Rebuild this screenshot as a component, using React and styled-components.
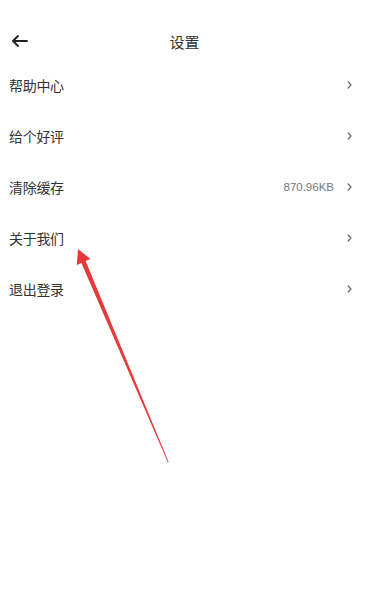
import React from 'react';
import styled, { createGlobalStyle } from 'styled-components';

const GlobalStyle = createGlobalStyle`
  html, body {
    margin: 0;
    padding: 0;
    background: #fff;
  }
  body {
    font-family: "Noto Sans CJK SC", "Noto Sans", sans-serif;
    color: #333;
  }
`;

const Page = styled.div`
  position: relative;
  width: 369px;
  height: 606px;
  background: #fff;
  overflow: hidden;
`;

const StatusSpace = styled.div`
  height: 21px;
`;

const Header = styled.div`
  height: 40px;
  display: flex;
  align-items: center;
  justify-content: center;
  position: relative;
`;

const BackButton = styled.button`
  position: absolute;
  left: 11px;
  top: 50%;
  transform: translateY(-50%);
  border: 0;
  background: none;
  padding: 0;
  display: flex;
  color: #222;
`;

const Title = styled.div`
  font-size: 15px;
  color: #333;
`;

const List = styled.div`
  display: flex;
  flex-direction: column;
`;

const Row = styled.div`
  height: 50.8px;
  margin-top: ${(p) => (p.first ? '-1px' : '0')};
  display: flex;
  align-items: center;
  padding: 0 17px 0 9px;
`;

const Label = styled.span`
  flex: 1;
  font-size: 14px;
  color: #333;
  letter-spacing: -0.3px;
`;

const Value = styled.span`
  font-family: "Liberation Sans", "Noto Sans", sans-serif;
  font-size: 11.5px;
  color: #777;
  margin-right: 13px;
`;

const Chevron = styled.svg`
  width: 5px;
  height: 8px;
  display: block;
`;

const Annotation = styled.svg`
  position: absolute;
  left: 0;
  top: 0;
  pointer-events: none;
`;

const items = [
  { label: '帮助中心' },
  { label: '给个好评' },
  { label: '清除缓存', value: '870.96KB' },
  { label: '关于我们' },
  { label: '退出登录' },
];

const App = () => (
  <Page>
    <GlobalStyle />
    <StatusSpace />
    <Header>
      <BackButton aria-label="back">
        <svg width="17" height="13" viewBox="0 0 17 13" fill="none">
          <path d="M16 6.5H2M7 1.5L2 6.5l5 5" stroke="currentColor" strokeWidth="1.9" strokeLinecap="round" strokeLinejoin="round" />
        </svg>
      </BackButton>
      <Title>设置</Title>
    </Header>
    <List>
      {items.map((item, i) => (
        <Row key={item.label} first={i === 0 ? 1 : 0}>
          <Label>{item.label}</Label>
          {item.value ? <Value>{item.value}</Value> : null}
          <Chevron viewBox="0 0 5 8" fill="none">
            <path d="M1.2 1L4 4 1.2 7" stroke="#666" strokeWidth="1.2" strokeLinecap="round" strokeLinejoin="round" />
          </Chevron>
        </Row>
      ))}
    </List>
    <Annotation width="369" height="606" viewBox="0 0 369 606">
      <polygon points="78,249 90.5,259 85.6,261.1 168.6,462 167.8,462.3 81.4,263 76.8,265" fill="#e5393a" />
    </Annotation>
  </Page>
);

export default App;
